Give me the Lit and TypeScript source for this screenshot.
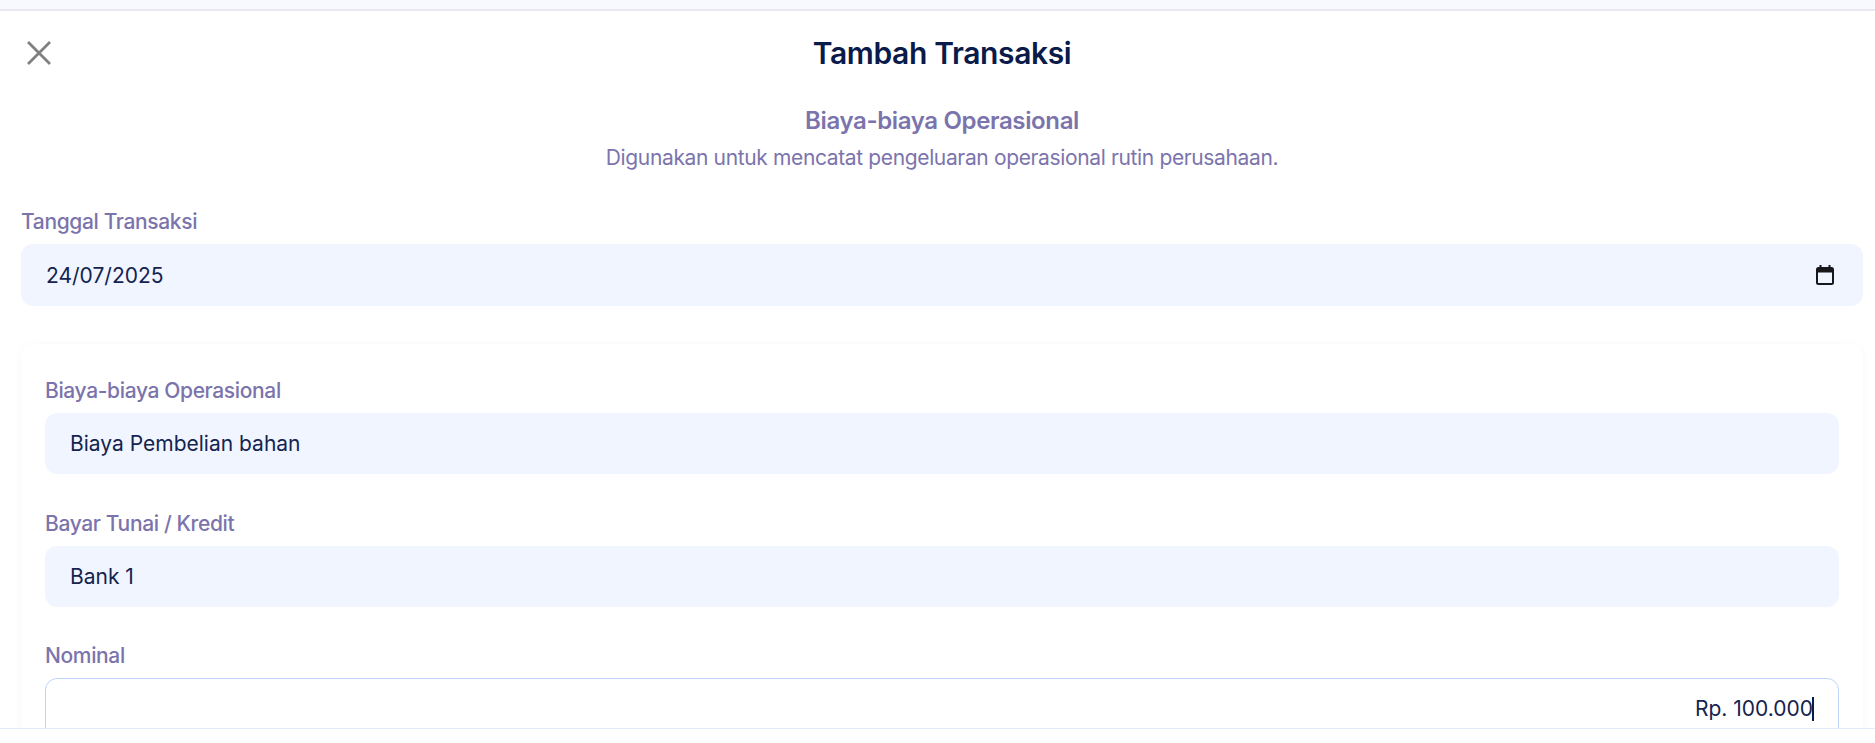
import { LitElement, html, css, svg } from "lit";
import { customElement } from "lit/decorators.js";

@customElement("app-root")
export class AppRoot extends LitElement {
  static styles = css`
    :host { display: block; font-family: Inter, "Liberation Sans", sans-serif; color: #0e1f4f; }
    .page { height: 743px; display: flex; flex-direction: column; background: #fff; overflow: hidden; }
    .topbar { height: 9px; flex: none; background: #f8f8ff; border-bottom: 2px solid #e9e9f5; box-sizing: content-box; }
    .scroll { flex: 1; min-height: 0; overflow: hidden; padding: 0 12px 0 21px; }
    .footer { flex: none; height: 14px; background: #fff; border-top: 1px solid #e3ecfd; }
    .header { display: flex; justify-content: center; align-items: center; position: relative; height: 84px; }
    .close { position: absolute; left: 6px; top: 30px; width: 24px; height: 24px; display: block; }
    h1 { margin: 0; font-size: 30px; letter-spacing: -0.36px; font-weight: 600; color: #0a1a4a; line-height: 40px; }
    .intro { text-align: center; margin-top: 10px; }
    h2 { margin: 0; font-size: 24px; letter-spacing: -0.36px; font-weight: 600; color: #7b74ac; line-height: 32px; }
    .desc { margin-top: 6px; font-size: 21px; letter-spacing: -0.36px; color: #7b74ac; line-height: 30px; }
    .field { display: flex; flex-direction: column; }
    .label { font-size: 21px; letter-spacing: -0.36px; font-weight: 500; color: #7b74ac; line-height: 28px; margin-bottom: 8px; }
    .box { background: #f1f5ff; border-radius: 12px; height: 61px; display: flex; align-items: center; padding: 0 25px; font-size: 21px; color: #14244f; box-sizing: border-box; justify-content: space-between; }
    .date { margin-top: 35px; }
    .date .box { height: 62px; padding-right: 29px; }
    .card { margin-top: 38px; border-radius: 12px; background: #fff; box-shadow: 0 2px 10px rgba(30, 30, 80, 0.04); padding: 33px 24px 24px; display: flex; flex-direction: column; gap: 35.5px; }
    .focus { background: #fff; border: 1px solid #bfd4fc; justify-content: flex-end; padding-right: 24px; height: 61px; }
    .caret { display: inline-block; width: 2px; height: 24px; background: #0a1a4a; margin-left: -1px; }
    .cal { width: 18px; height: 20px; display: block; }
  `;

  render() {
    return html`
      <div class="page">
        <div class="topbar"></div>
        <div class="scroll">
          <div class="header">
            <svg class="close" viewBox="0 0 24 24">
              ${svg`<path d="M1 1 L23 23 M23 1 L1 23" fill="none" stroke="#808080" stroke-width="2.8"/>`}
            </svg>
            <h1>Tambah Transaksi</h1>
          </div>
          <div class="intro">
            <h2>Biaya-biaya Operasional</h2>
            <div class="desc">Digunakan untuk mencatat pengeluaran operasional rutin perusahaan.</div>
          </div>
          <div class="field date">
            <div class="label">Tanggal Transaksi</div>
            <div class="box">
              <span>24/07/2025</span>
              <svg class="cal" viewBox="0 0 18 20">
                ${svg`<path d="M4.5 0 V3 M13.5 0 V3" stroke="#17171c" stroke-width="2"/><rect x="1" y="3" width="16" height="16" rx="1.5" fill="none" stroke="#17171c" stroke-width="2"/><rect x="1" y="3" width="16" height="4.5" fill="#17171c"/>`}
              </svg>
            </div>
          </div>
          <div class="card">
            <div class="field">
              <div class="label">Biaya-biaya Operasional</div>
              <div class="box">Biaya Pembelian bahan</div>
            </div>
            <div class="field">
              <div class="label">Bayar Tunai / Kredit</div>
              <div class="box">Bank 1</div>
            </div>
            <div class="field">
              <div class="label">Nominal</div>
              <div class="box focus"><span>Rp. 100.000</span><span class="caret"></span></div>
            </div>
          </div>
        </div>
        <div class="footer"></div>
      </div>
    `;
  }
}
